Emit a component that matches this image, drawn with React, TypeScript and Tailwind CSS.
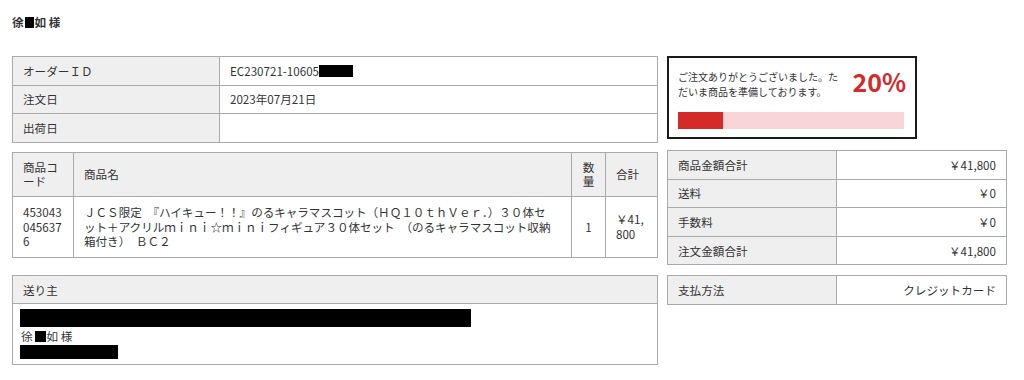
import React from "react";

const font = { fontFamily: '"Noto Sans CJK JP", "Noto Sans", sans-serif' };

export default function App() {
  return (
    <div className="w-[1024px] h-[380px] bg-white text-[#333] text-[11.6px] px-[12px] pt-[14px] overflow-hidden" style={font}>
      <div className="h-[16px] leading-[16px] font-bold flex items-center">
        <span>徐</span>
        <span className="inline-block w-[9px] h-[11px] bg-black ml-[1px] mr-[1px]" />
        <span>如&nbsp;様</span>
      </div>
      <div className="flex gap-[9px] mt-[26px]">
        {/* left column */}
        <div className="w-[646px] flex flex-col">
          <table className="w-full border-collapse table-fixed">
            <colgroup>
              <col className="w-[207px]" />
              <col />
            </colgroup>
            <tbody>
              {[
                ["オーダーＩＤ", "id"],
                ["注文日", "2023年07月21日"],
                ["出荷日", ""],
              ].map(([k, v]) => (
                <tr key={k}>
                  <td className="border border-[#aaa] bg-[#efefef] px-[10px] py-0 h-[28.6px] leading-[16px]">{k}</td>
                  <td className="border border-[#aaa] px-[10px] py-0 h-[28.6px] leading-[16px]">
                    {v === "id" ? (
                      <span className="flex items-center">
                        EC230721-10605<span className="inline-block w-[34px] h-[12px] bg-black" />
                      </span>
                    ) : (
                      v
                    )}
                  </td>
                </tr>
              ))}
            </tbody>
          </table>

          <table className="w-full border-collapse table-fixed mt-[9px]">
            <colgroup>
              <col className="w-[61px]" />
              <col />
              <col className="w-[34px]" />
              <col className="w-[52px]" />
            </colgroup>
            <thead>
              <tr className="bg-[#efefef]">
                <th className="border border-[#aaa] font-normal text-left px-[10px] py-[7px] leading-[14px] h-[44px]">
                  商品コ<br />ード
                </th>
                <th className="border border-[#aaa] font-normal text-left px-[10px] py-[7px] leading-[14px]">商品名</th>
                <th className="border border-[#aaa] font-normal text-center px-0 py-[7px] leading-[14px]">
                  数<br />量
                </th>
                <th className="border border-[#aaa] font-normal text-left px-[10px] py-[7px] leading-[14px]">合計</th>
              </tr>
            </thead>
            <tbody>
              <tr>
                <td className="border border-[#aaa] px-[10px] py-[7px] leading-[14.5px] h-[61px]">
                  453043<br />045637<br />6
                </td>
                <td className="border border-[#aaa] pl-[10px] pr-0 py-[7px] leading-[14.5px] whitespace-nowrap tracking-[-0.05px]">
                  ＪＣＳ限定　『ハイキュー！！』のるキャラマスコット（ＨＱ１０ｔｈＶｅｒ．）３０体セ
                  <br />
                  ット＋アクリルｍｉｎｉ☆ｍｉｎｉフィギュア３０体セット　（のるキャラマスコット収納
                  <br />
                  箱付き）　ＢＣ２
                </td>
                <td className="border border-[#aaa] text-center py-[7px] leading-[14.5px]">1</td>
                <td className="border border-[#aaa] pl-[10px] pr-0 py-[7px] leading-[14.5px]">
                  ￥41,<br />800
                </td>
              </tr>
            </tbody>
          </table>

          <div className="mt-[17px] border border-[#aaa]">
            <div className="bg-[#efefef] h-[28px] leading-[28px] px-[10px] border-b border-[#aaa]">送り主</div>
            <div className="px-[7px] pt-[5px] pb-[5px]">
              <div className="w-[451px] h-[18px] bg-black" />
              <div className="flex items-center h-[18px] leading-[18px] pl-[1px]">
                <span>徐</span>
                <span className="inline-block w-[11px] h-[11px] bg-black ml-[2px] mr-[1px] mt-[2px]" />
                <span>如&nbsp;様</span>
              </div>
              <div className="w-[98px] h-[14px] bg-black" />
            </div>
          </div>
        </div>

        {/* right column */}
        <div className="w-[340px] flex flex-col">
          <div className="w-[250px] h-[83px] border-2 border-[#1a1a1a] px-[9px] pt-[8px]">
            <div className="flex justify-between items-start">
              <div className="text-[10px] leading-[15px] pt-[3px] whitespace-nowrap">
                ご注文ありがとうございました。た
                <br />
                だいま商品を準備しております。
              </div>
              <div className="text-[25px] leading-[30px] font-semibold text-[#d42a2a]">20%</div>
            </div>
            <div className="mt-[13px] h-[17px] w-[226px] bg-[#f8d6d7]">
              <div className="h-full bg-[#d52a2a]" style={{ width: "20%" }} />
            </div>
          </div>

          <table className="w-full border-collapse table-fixed mt-[11px]">
            <colgroup>
              <col className="w-[169px]" />
              <col />
            </colgroup>
            <tbody>
              {[
                ["商品金額合計", "￥41,800"],
                ["送料", "￥0"],
                ["手数料", "￥0"],
                ["注文金額合計", "￥41,800"],
              ].map(([k, v]) => (
                <tr key={k}>
                  <td className="border border-[#aaa] bg-[#efefef] px-[10px] py-0 h-[28.6px] leading-[16px]">{k}</td>
                  <td className="border border-[#aaa] px-[10px] py-0 h-[28.6px] leading-[16px] text-right">{v}</td>
                </tr>
              ))}
            </tbody>
          </table>

          <table className="w-full border-collapse table-fixed mt-[10px]">
            <colgroup>
              <col className="w-[169px]" />
              <col />
            </colgroup>
            <tbody>
              <tr>
                <td className="border border-[#aaa] bg-[#efefef] px-[10px] py-0 h-[28.6px] leading-[16px]">支払方法</td>
                <td className="border border-[#aaa] px-[10px] py-0 h-[28.6px] leading-[16px] text-right">クレジットカード</td>
              </tr>
            </tbody>
          </table>
        </div>
      </div>
    </div>
  );
}
